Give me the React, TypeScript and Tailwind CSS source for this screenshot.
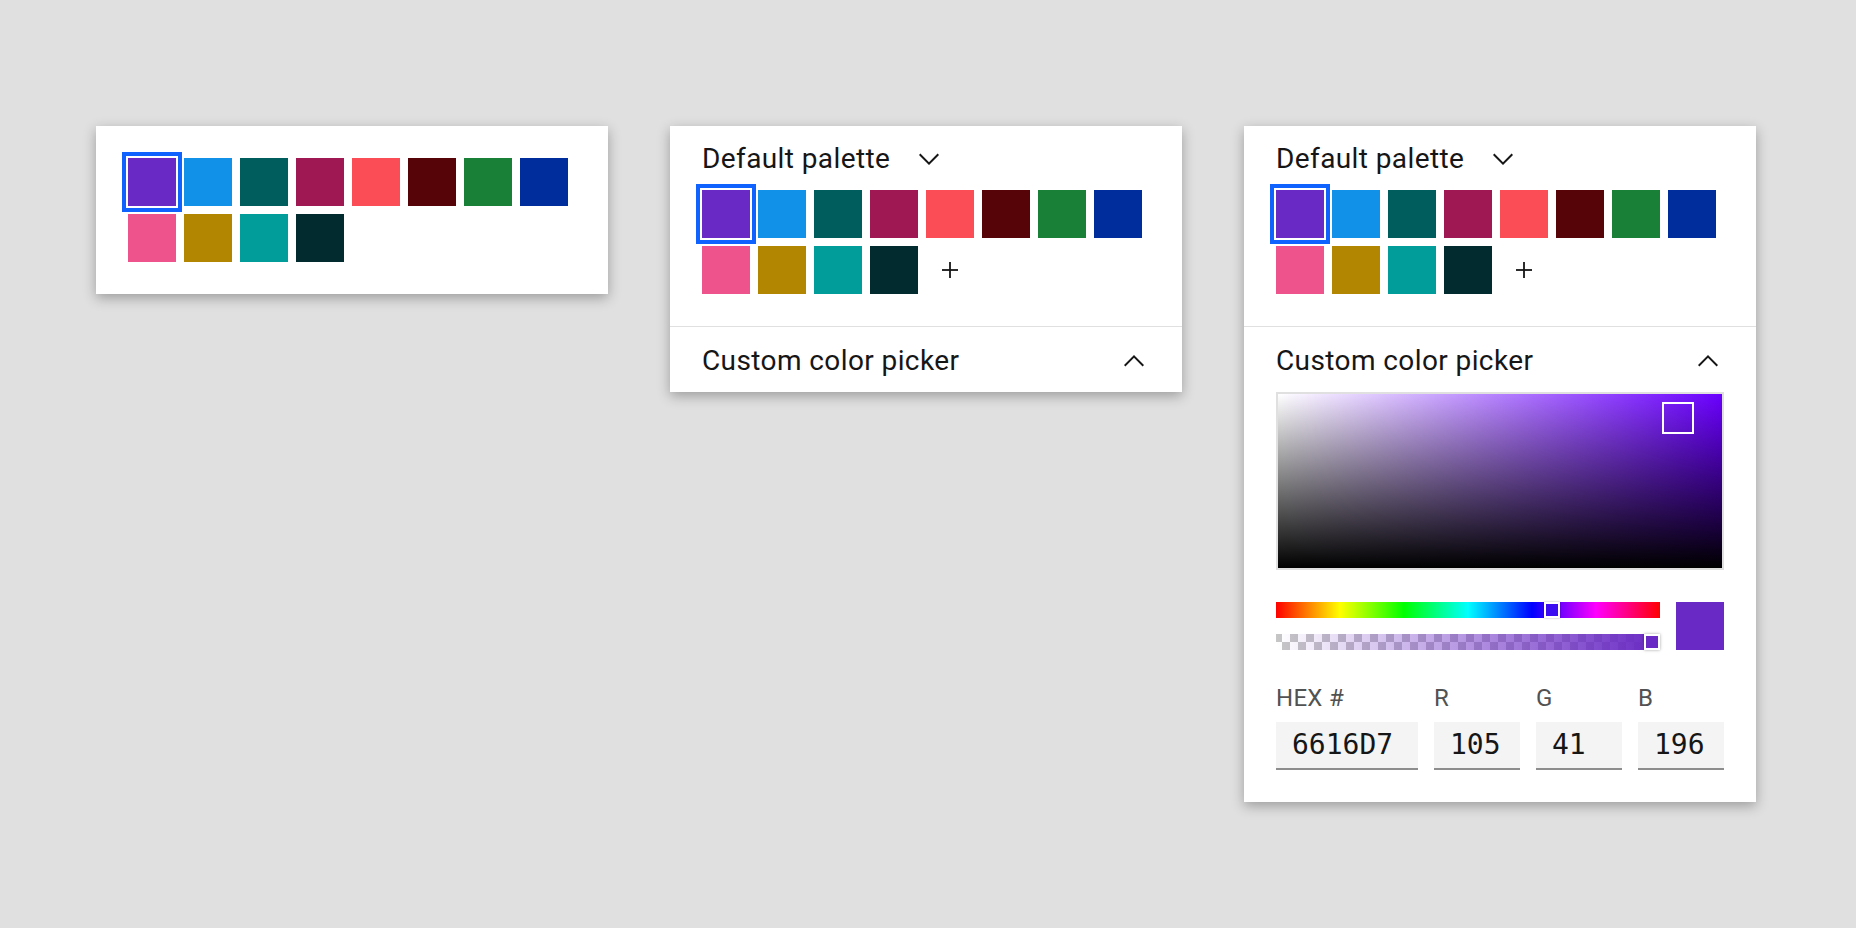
import React from 'react'

const SWATCHES = [
  '#6929c4', '#1192e8', '#005d5d', '#9f1853', '#fa4d56', '#570408', '#198038', '#002d9c',
  '#ee538b', '#b28600', '#009d9a', '#022b30',
]

const SANS = "font-['Roboto',sans-serif]"

function ChevronDown() {
  return (
    <svg width="32" height="32" viewBox="0 0 16 16" fill="#161616">
      <path d="M8 11L3 6 3.7 5.3 8 9.6 12.3 5.3 13 6z" />
    </svg>
  )
}

function ChevronUp() {
  return (
    <svg width="32" height="32" viewBox="0 0 16 16" fill="#161616">
      <path d="M8 5L13 10 12.3 10.7 8 6.4 3.7 10.7 3 10z" />
    </svg>
  )
}

function Swatches({ withAdd }: { withAdd?: boolean }) {
  return (
    <div className="grid grid-cols-[repeat(8,48px)] gap-2">
      {SWATCHES.map((c, i) => (
        <div
          key={c}
          className={`h-12 w-12 ${i === 0 ? 'outline-4 outline-[#0f62fe] outline-offset-2' : ''}`}
          style={{ backgroundColor: c }}
        />
      ))}
      {withAdd && (
        <div className="h-12 w-12 flex items-center justify-center">
          <svg width="16" height="16" viewBox="0 0 16 16" fill="#161616">
            <rect x="7.1" y="0" width="1.8" height="16" />
            <rect x="0" y="7.1" width="16" height="1.8" />
          </svg>
        </div>
      )}
    </div>
  )
}

function PaletteHeader() {
  return (
    <div className="h-16 flex items-center pt-[2px]">
      <span className="w-[211px] text-[28px] leading-9 tracking-[0.4px] text-[#161616]">Default palette</span>
      <ChevronDown />
    </div>
  )
}

function PickerHeader() {
  return (
    <div className="h-[65px] flex items-center justify-between px-8 pt-[2px]">
      <span className="text-[28px] leading-9 tracking-[0.4px] text-[#161616]">Custom color picker</span>
      <ChevronUp />
    </div>
  )
}

function Field({ label, value, width }: { label: string; value: string; width: string }) {
  return (
    <div className={`${width} flex flex-col gap-2`}>
      <span className="text-[24px] leading-8 tracking-[0.3px] text-[#525252]">{label}</span>
      <div className="h-12 bg-[#f4f4f4] border-b-2 border-[#8d8d8d] flex items-center pl-4 font-['DejaVu_Sans_Mono',monospace] text-[28px] text-[#161616]">
        {value}
      </div>
    </div>
  )
}

function CustomPicker() {
  return (
    <div className="px-8 pb-8">
      <div className="relative h-[178px] border-2 border-[#e0e0e0] bg-[#6a00ff]">
        <div className="absolute inset-0 bg-[linear-gradient(to_right,#ffffff,rgba(255,255,255,0))]" />
        <div className="absolute inset-0 bg-[linear-gradient(to_bottom,rgba(0,0,0,0),#000000)]" />
        <div className="absolute left-[384px] top-[8px] h-8 w-8 border-2 border-white" />
      </div>
      <div className="mt-8 flex gap-4">
        <div className="flex-1 flex flex-col gap-4">
          <div className="relative h-4 bg-[linear-gradient(to_right,#ff0000,#ffff00,#00ff00,#00ffff,#0000ff,#ff00ff,#ff0000)]">
            <div className="absolute left-[268px] top-0 h-4 w-4 border-2 border-white bg-[#3b0cf2] shadow-[0_0_2px_rgba(0,0,0,0.3)]" />
          </div>
          <div className="relative h-4 bg-[conic-gradient(#ffffff_25%,#c6c6c6_0_50%,#ffffff_0_75%,#c6c6c6_0)] bg-[length:16px_16px] bg-[position:-2px_0]">
            <div className="absolute inset-0 bg-[linear-gradient(to_right,rgba(105,41,196,0),rgba(105,41,196,1))]" />
            <div className="absolute right-0 top-0 h-4 w-4 border-2 border-white bg-[#6929c4] shadow-[0_0_3px_rgba(0,0,0,0.35)]" />
          </div>
        </div>
        <div className="h-12 w-12 bg-[#6929c4]" />
      </div>
      <div className="mt-8 flex gap-4">
        <Field label="HEX #" value="6616D7" width="w-[142px]" />
        <Field label="R" value="105" width="w-[86px]" />
        <Field label="G" value="41" width="w-[86px]" />
        <Field label="B" value="196" width="w-[86px]" />
      </div>
    </div>
  )
}

const PANEL = 'w-[512px] bg-white shadow-[0_4px_12px_rgba(0,0,0,0.3)]'

export default function App() {
  return (
    <div className={`min-h-[928px] bg-[#e0e0e0] ${SANS}`}>
      <div className="flex items-start gap-[62px] pl-[96px] pt-[126px]">
        <div className={`${PANEL} p-8`}>
          <Swatches />
        </div>

        <div className={PANEL}>
          <div className="px-8 pb-8">
            <PaletteHeader />
            <Swatches withAdd />
          </div>
          <div className="h-px bg-[#e0e0e0]" />
          <PickerHeader />
        </div>

        <div className={PANEL}>
          <div className="px-8 pb-8">
            <PaletteHeader />
            <Swatches withAdd />
          </div>
          <div className="h-px bg-[#e0e0e0]" />
          <PickerHeader />
          <CustomPicker />
        </div>
      </div>
    </div>
  )
}
